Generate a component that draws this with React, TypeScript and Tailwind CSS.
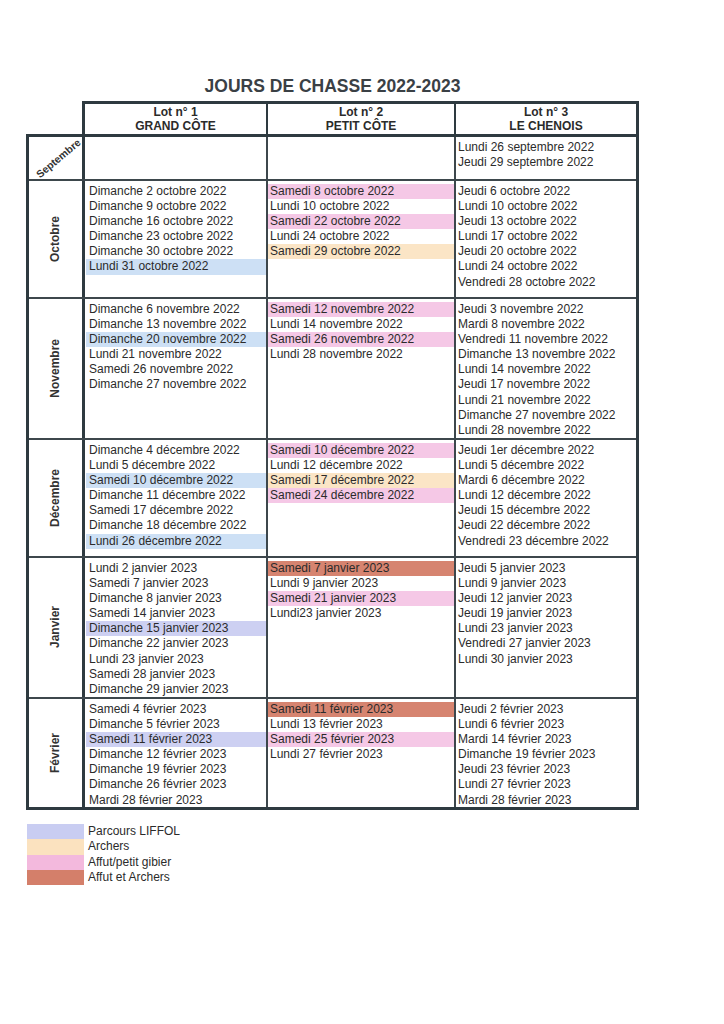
type Hl = "" | "blue" | "lav" | "peach" | "pink" | "red";
type Line = [string, Hl?];

const hlClass: Record<string, string> = {
  blue: "bg-[#cde0f5]",
  lav: "bg-[#cdd0f2]",
  peach: "bg-[#fbe5c6]",
  pink: "bg-[#f5c8e6]",
  red: "bg-[#d68470]",
};

interface MonthRow {
  name: string;
  h: string;
  lots: Line[][];
}

const rows: MonthRow[] = [
  {
    name: "Septembre",
    h: "h-[42px]",
    lots: [[], [], [["Lundi 26 septembre 2022"], ["Jeudi 29 septembre 2022"]]],
  },
  {
    name: "Octobre",
    h: "h-[118px]",
    lots: [
      [
        ["Dimanche 2 octobre 2022"],
        ["Dimanche 9 octobre 2022"],
        ["Dimanche 16 octobre 2022"],
        ["Dimanche 23 octobre 2022"],
        ["Dimanche 30 octobre 2022"],
        ["Lundi 31 octobre 2022", "blue"],
      ],
      [
        ["Samedi 8 octobre 2022", "pink"],
        ["Lundi 10 octobre 2022"],
        ["Samedi 22 octobre 2022", "pink"],
        ["Lundi 24 octobre 2022"],
        ["Samedi 29 octobre 2022", "peach"],
      ],
      [
        ["Jeudi 6 octobre 2022"],
        ["Lundi 10 octobre 2022"],
        ["Jeudi 13 octobre 2022"],
        ["Lundi 17 octobre 2022"],
        ["Jeudi 20 octobre 2022"],
        ["Lundi 24 octobre 2022"],
        ["Vendredi 28 octobre 2022"],
      ],
    ],
  },
  {
    name: "Novembre",
    h: "h-[141px]",
    lots: [
      [
        ["Dimanche 6 novembre 2022"],
        ["Dimanche 13 novembre 2022"],
        ["Dimanche 20 novembre 2022", "blue"],
        ["Lundi 21 novembre 2022"],
        ["Samedi 26 novembre 2022"],
        ["Dimanche 27 novembre 2022"],
      ],
      [
        ["Samedi 12 novembre 2022", "pink"],
        ["Lundi 14 novembre 2022"],
        ["Samedi 26 novembre 2022", "pink"],
        ["Lundi 28 novembre 2022"],
      ],
      [
        ["Jeudi 3 novembre 2022"],
        ["Mardi 8 novembre 2022"],
        ["Vendredi 11 novembre 2022"],
        ["Dimanche 13 novembre 2022"],
        ["Lundi 14 novembre 2022"],
        ["Jeudi 17 novembre 2022"],
        ["Lundi 21 novembre 2022"],
        ["Dimanche 27 novembre 2022"],
        ["Lundi 28 novembre 2022"],
      ],
    ],
  },
  {
    name: "Décembre",
    h: "h-[118px]",
    lots: [
      [
        ["Dimanche 4 décembre 2022"],
        ["Lundi 5 décembre 2022"],
        ["Samedi 10 décembre 2022", "blue"],
        ["Dimanche 11 décembre 2022"],
        ["Samedi 17 décembre 2022"],
        ["Dimanche 18 décembre 2022"],
        ["Lundi 26 décembre 2022", "blue"],
      ],
      [
        ["Samedi 10 décembre 2022", "pink"],
        ["Lundi 12 décembre 2022"],
        ["Samedi 17 décembre 2022", "peach"],
        ["Samedi 24 décembre 2022", "pink"],
      ],
      [
        ["Jeudi 1er décembre 2022"],
        ["Lundi 5 décembre 2022"],
        ["Mardi 6 décembre 2022"],
        ["Lundi 12 décembre 2022"],
        ["Jeudi 15 décembre 2022"],
        ["Jeudi 22 décembre 2022"],
        ["Vendredi 23 décembre 2022"],
      ],
    ],
  },
  {
    name: "Janvier",
    h: "h-[141px]",
    lots: [
      [
        ["Lundi 2 janvier 2023"],
        ["Samedi 7 janvier 2023"],
        ["Dimanche 8 janvier 2023"],
        ["Samedi 14 janvier 2023"],
        ["Dimanche 15 janvier 2023", "lav"],
        ["Dimanche 22 janvier 2023"],
        ["Lundi 23 janvier 2023"],
        ["Samedi 28 janvier 2023"],
        ["Dimanche 29 janvier 2023"],
      ],
      [
        ["Samedi 7 janvier 2023", "red"],
        ["Lundi 9 janvier 2023"],
        ["Samedi 21 janvier 2023", "pink"],
        ["Lundi23 janvier 2023"],
      ],
      [
        ["Jeudi 5 janvier 2023"],
        ["Lundi 9 janvier 2023"],
        ["Jeudi 12 janvier 2023"],
        ["Jeudi 19 janvier 2023"],
        ["Lundi 23 janvier 2023"],
        ["Vendredi 27 janvier 2023"],
        ["Lundi 30 janvier 2023"],
      ],
    ],
  },
  {
    name: "Février",
    h: "h-[110px]",
    lots: [
      [
        ["Samedi 4 février 2023"],
        ["Dimanche 5 février 2023"],
        ["Samedi 11 février 2023", "lav"],
        ["Dimanche 12 février 2023"],
        ["Dimanche 19 février 2023"],
        ["Dimanche 26 février 2023"],
        ["Mardi 28 février 2023"],
      ],
      [
        ["Samedi 11 février 2023", "red"],
        ["Lundi 13 février 2023"],
        ["Samedi 25 février 2023", "pink"],
        ["Lundi 27 février 2023"],
      ],
      [
        ["Jeudi 2 février 2023"],
        ["Lundi 6 février 2023"],
        ["Mardi 14 février 2023"],
        ["Dimanche 19 février 2023"],
        ["Jeudi 23 février 2023"],
        ["Lundi 27 février 2023"],
        ["Mardi 28 février 2023"],
      ],
    ],
  },
];

const lotWidths = ["w-[181px]", "w-[188px] border-l-2", "w-[182px] border-l-2"];
const legend = [
  ["bg-[#c9cdf2]", "Parcours LIFFOL"],
  ["bg-[#fbe2bf]", "Archers"],
  ["bg-[#f3b9dd]", "Affut/petit gibier"],
  ["bg-[#d47f6a]", "Affut et Archers"],
];

export default function App() {
  return (
    <div className="w-[724px] h-[1024px] bg-white text-[#2b2b2b] font-['Liberation_Sans',Arial,sans-serif]">
      <div className="pt-[76px] pl-[26px] w-[639px]">
        <h1 className="text-center text-[17.5px] leading-[21px] font-bold text-[#3a4045] mb-[4px]">
          JOURS DE CHASSE 2022-2023
        </h1>

        {/* header */}
        <div className="flex">
          <div className="w-[56px]" />
          <div className="flex h-[33px] border-t-[3px] border-x-[3px] border-[#2e3a40] text-[12px] leading-[14px] font-bold text-center">
            {[
              ["Lot n° 1", "GRAND CÔTE"],
              ["Lot n° 2", "PETIT CÔTE"],
              ["Lot n° 3", "LE CHENOIS"],
            ].map(([a, b], i) => (
              <div key={a} className={`${lotWidths[i]} border-[#2e3a40] pt-[1px]`}>
                <div>{a}</div>
                <div>{b}</div>
              </div>
            ))}
          </div>
        </div>

        {/* body */}
        <div className="border-[3px] border-[#2e3a40] text-[12px] leading-[15.1px]">
          {rows.map((row, ri) => (
            <div key={row.name} className={`flex ${row.h} ${ri > 0 ? "border-t-2 border-[#3d474c]" : ""}`}>
              <div className="w-[53px] border-r-[3px] border-[#2e3a40] box-content flex items-center justify-center font-bold text-[#333]">
                {ri === 0 ? (
                  <span className="block -rotate-[40deg] translate-x-[3px] text-[10.5px] leading-[12px] whitespace-nowrap">
                    {row.name}
                  </span>
                ) : (
                  <span className="[writing-mode:vertical-rl] rotate-180 whitespace-nowrap">{row.name}</span>
                )}
              </div>
              {row.lots.map((lines, li) => (
                <div key={li} className={`${lotWidths[li]} border-[#3d474c] pt-[3px]`}>
                  {lines.map(([t, h]) => (
                    <div
                      key={t}
                      className={`${li === 0 ? "pl-[3px] ml-px" : "pl-[2px]"} whitespace-nowrap ${h ? hlClass[h] : ""}`}
                    >
                      {t}
                    </div>
                  ))}
                </div>
              ))}
            </div>
          ))}
        </div>

        {/* legend */}
        <div className="mt-[14px] text-[12px] leading-[15.3px]">
          {legend.map(([c, t]) => (
            <div key={t} className="flex items-center">
              <div className={`w-[57px] h-[15.3px] ml-px ${c}`} />
              <span className="pl-[4px]">{t}</span>
            </div>
          ))}
        </div>
      </div>
    </div>
  );
}
